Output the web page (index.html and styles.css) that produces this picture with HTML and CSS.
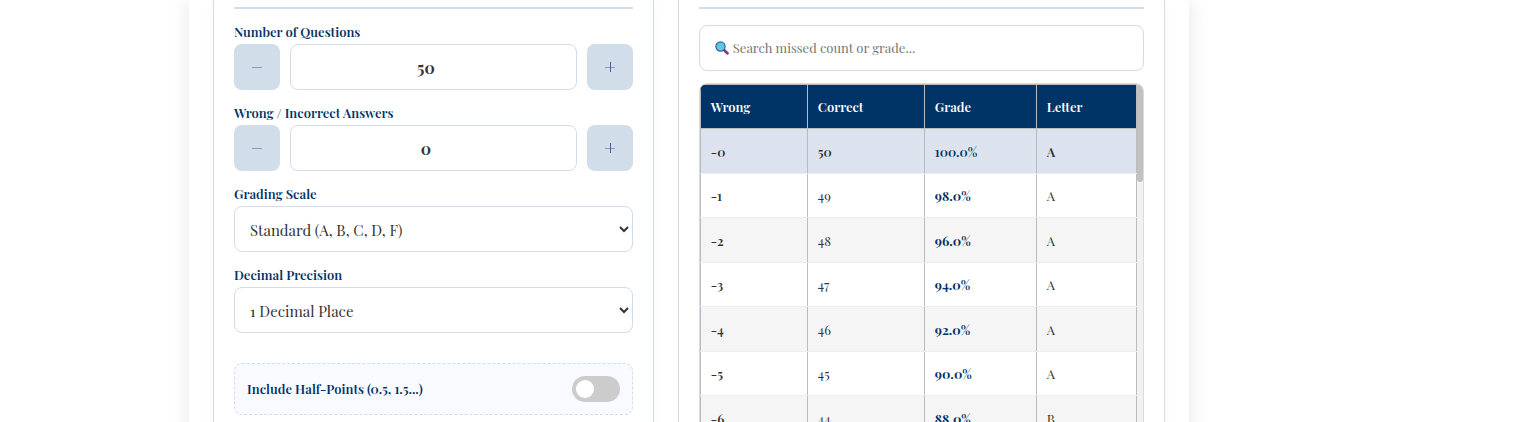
FILE: index.html
```html
<!DOCTYPE html>
<html lang="en">
<head>
    <meta charset="UTF-8">
    <meta name="viewport" content="width=device-width, initial-scale=1.0">
    <title>Grade Calculator</title>
    <link rel="stylesheet" href="styles.css">
</head>
<body>
    <main class="calculator">
        <section class="panel">
            <div class="panel-header"></div>

            <div class="form-group">
                <label for="questions">Number of Questions</label>
                <div class="stepper">
                    <button type="button" data-target="questions" data-step="-1" aria-label="Fewer questions">
                        <svg width="12" height="12" viewBox="0 0 12 12"><path class="bar" d="M1 6.5h10"/></svg>
                    </button>
                    <input type="number" id="questions" value="50" min="1">
                    <button type="button" data-target="questions" data-step="1" aria-label="More questions">
                        <svg width="12" height="12" viewBox="0 0 12 12"><path class="bar" d="M1 6.5h10"/><path class="stem" d="M6.5 1v10"/></svg>
                    </button>
                </div>
            </div>

            <div class="form-group">
                <label for="wrong">Wrong / Incorrect Answers</label>
                <div class="stepper">
                    <button type="button" data-target="wrong" data-step="-1" aria-label="Fewer wrong answers">
                        <svg width="12" height="12" viewBox="0 0 12 12"><path class="bar" d="M1 6.5h10"/></svg>
                    </button>
                    <input type="number" id="wrong" value="0" min="0">
                    <button type="button" data-target="wrong" data-step="1" aria-label="More wrong answers">
                        <svg width="12" height="12" viewBox="0 0 12 12"><path class="bar" d="M1 6.5h10"/><path class="stem" d="M6.5 1v10"/></svg>
                    </button>
                </div>
            </div>

            <div class="form-group">
                <label for="scale">Grading Scale</label>
                <select id="scale">
                    <option>Standard (A, B, C, D, F)</option>
                </select>
            </div>

            <div class="form-group">
                <label for="precision">Decimal Precision</label>
                <select id="precision">
                    <option value="1">1 Decimal Place</option>
                </select>
            </div>

            <div class="toggle-row">
                <label for="halfPoints">Include Half-Points (0.5, 1.5...)</label>
                <input type="checkbox" id="halfPoints" class="switch">
            </div>
        </section>

        <section class="panel">
            <div class="panel-header"></div>

            <div class="search-box">
                <svg class="search-icon" width="14" height="14" viewBox="0 0 14 14">
                    <path d="M9 9l3.4 3.2" stroke="#7b3f7d" stroke-width="2.8" stroke-linecap="round"/>
                    <circle cx="5.5" cy="5.5" r="4.6" fill="#5bc8ea" stroke="#3b5f95" stroke-width="1.2"/>
                </svg>
                <input type="search" id="search" placeholder="Search missed count or grade..." aria-label="Search missed count or grade">
            </div>

            <div class="table-wrap">
                <div class="table-scroll" id="tableScroll">
                    <table>
                        <thead>
                            <tr>
                                <th class="col-wrong">Wrong</th>
                                <th class="col-correct">Correct</th>
                                <th class="col-grade">Grade</th>
                                <th>Letter</th>
                            </tr>
                        </thead>
                        <tbody id="gradeRows"></tbody>
                    </table>
                </div>
                <div class="scroll-track">
                    <div class="scroll-thumb" id="scrollThumb"></div>
                </div>
            </div>
        </section>
    </main>

    <script src="script.js"></script>
</body>
</html>
```
FILE: styles.css
```css
* {
    box-sizing: border-box;
}

body {
    font-family: "Playfair Display", "Liberation Serif", serif;
    background-color: white;
    color: #333;
    margin: 0;
    padding-right: 141px;
    height: 100vh;
    overflow: hidden;
}

.calculator {
    display: grid;
    grid-template-columns: 0.95fr 1.05fr;
    gap: 24px;
    max-width: 1000px;
    margin: 0 auto;
    padding: 0 24px 24px;
    background-color: white;
    box-shadow: 0 0 20px rgba(0, 0, 0, 0.1);
}

.panel {
    min-width: 0;
    padding: 0 20px 20px;
    border: 1px solid #d1dde9;
    border-top: none;
    box-shadow: 0 4px 12px rgba(0, 0, 0, 0.03);
}

.panel-header {
    height: 9px;
    margin-bottom: 16px;
    border-bottom: 2px solid #d1dde9;
}

.form-group {
    margin-bottom: 16px;
}

label {
    display: block;
    font-size: 13px;
    line-height: 14px;
    font-weight: 600;
    color: #003366;
}

.form-group label {
    margin-bottom: 5px;
}

input,
select,
button {
    font-family: inherit;
    color: #333;
}

input[type="number"],
input[type="search"],
select {
    display: block;
    width: 100%;
    height: 46px;
    border: 1px solid #d1dde9;
    border-radius: 8px;
    background-color: white;
}

.stepper {
    display: flex;
    gap: 10px;
}

.stepper input[type="number"] {
    flex: 1;
    min-width: 0;
    padding: 0 12px;
    font-size: 16px;
    font-weight: bold;
    text-align: center;
}

.stepper button {
    display: flex;
    justify-content: center;
    align-items: center;
    width: 46px;
    height: 46px;
    padding: 0;
    border: none;
    border-radius: 8px;
    background-color: #d1dde9;
    cursor: pointer;
}

.bar {
    stroke: #84a0b8;
}

.stem {
    stroke: #5c5a8c;
}

select {
    padding: 2px 0 0 11px;
    font-size: 15px;
}

.toggle-row {
    display: flex;
    justify-content: space-between;
    align-items: center;
    margin-top: 30px;
    padding: 12px;
    border: 1px dashed #d1dde9;
    border-radius: 8px;
    background-color: #f8faff;
}

.switch {
    appearance: none;
    width: 48px;
    height: 26px;
    margin: 0;
    padding: 4px;
    border-radius: 13px;
    background-color: #ccc;
    cursor: pointer;
}

.switch::before {
    content: "";
    display: block;
    width: 18px;
    height: 18px;
    border-radius: 50%;
    background-color: white;
}

.switch:checked {
    background-color: #003366;
}

.switch:checked::before {
    margin-left: auto;
}

.search-box {
    position: relative;
    margin-bottom: 12px;
}

.search-icon {
    position: absolute;
    top: 16px;
    left: 16px;
    fill: none;
}

input[type="search"] {
    padding: 0 14px 2px 33px;
    font-size: 13px;
}

input[type="search"]::placeholder {
    color: #757575;
}

.table-wrap {
    display: flex;
    height: 478px;
    overflow: hidden;
    border: 1px solid #d1dde9;
    border-radius: 8px;
}

.table-scroll {
    flex: 1;
    overflow-y: auto;
    scrollbar-width: none;
}

.scroll-track {
    width: 6px;
    background-color: #f1f1f1;
}

.scroll-thumb {
    height: 98px;
    border-radius: 3px;
    background-color: #c1c1c1;
}

table {
    width: 100%;
    border-collapse: collapse;
    font-size: 13px;
}

th,
td {
    padding: 0 10px;
    border: 1px solid #bbb;
    text-align: left;
}

th {
    height: 44px;
    background-color: #003366;
    color: white;
    font-weight: 600;
}

td {
    height: 45px;
    border-bottom-color: #ececf4;
    border-top-color: #ececf4;
}

tr:nth-child(even) td {
    height: 44px;
}

tr:nth-child(odd) td {
    background-color: #f5f5f5;
}

tbody tr.current td {
    background-color: #dce3ee;
    font-weight: 600;
}

td:first-child {
    font-weight: 600;
}

td:nth-child(3) {
    font-weight: bold;
    color: #003366;
}

.col-wrong {
    width: 107px;
}

.col-correct {
    width: 117px;
}

.col-grade {
    width: 112px;
}
```
FILE: script.js
```javascript
const questions = document.getElementById('questions');
const wrong = document.getElementById('wrong');
const precision = document.getElementById('precision');
const halfPoints = document.getElementById('halfPoints');
const search = document.getElementById('search');
const gradeRows = document.getElementById('gradeRows');
const tableScroll = document.getElementById('tableScroll');
const scrollThumb = document.getElementById('scrollThumb');

function getLetter(grade) {
    if (grade >= 90) return 'A';
    if (grade >= 80) return 'B';
    if (grade >= 70) return 'C';
    if (grade >= 60) return 'D';
    return 'F';
}

function renderTable() {
    const total = Number(questions.value);
    const step = halfPoints.checked ? 0.5 : 1;
    const query = search.value.trim().toLowerCase();
    gradeRows.innerHTML = '';

    for (let missed = 0; missed <= total; missed += step) {
        const grade = (total - missed) / total * 100;
        const cells = ['-' + missed, total - missed, grade.toFixed(precision.value) + '%', getLetter(grade)];
        if (query && !cells.join(' ').toLowerCase().includes(query)) continue;

        const row = gradeRows.insertRow();
        if (missed === Number(wrong.value)) row.className = 'current';
        cells.forEach(text => row.insertCell().textContent = text);
    }
}

document.querySelectorAll('.stepper button').forEach(button => {
    button.addEventListener('click', function() {
        const input = document.getElementById(button.dataset.target);
        input.value = Math.max(Number(input.min), Number(input.value) + Number(button.dataset.step));
        renderTable();
    });
});

[questions, wrong, precision, halfPoints, search].forEach(input => {
    input.addEventListener('input', renderTable);
});

// Keep the thumb in step with the table
tableScroll.addEventListener('scroll', function() {
    const range = tableScroll.scrollHeight - tableScroll.clientHeight;
    const room = tableScroll.clientHeight - scrollThumb.offsetHeight;
    scrollThumb.style.marginTop = (tableScroll.scrollTop / range * room) + 'px';
});

renderTable();
```
